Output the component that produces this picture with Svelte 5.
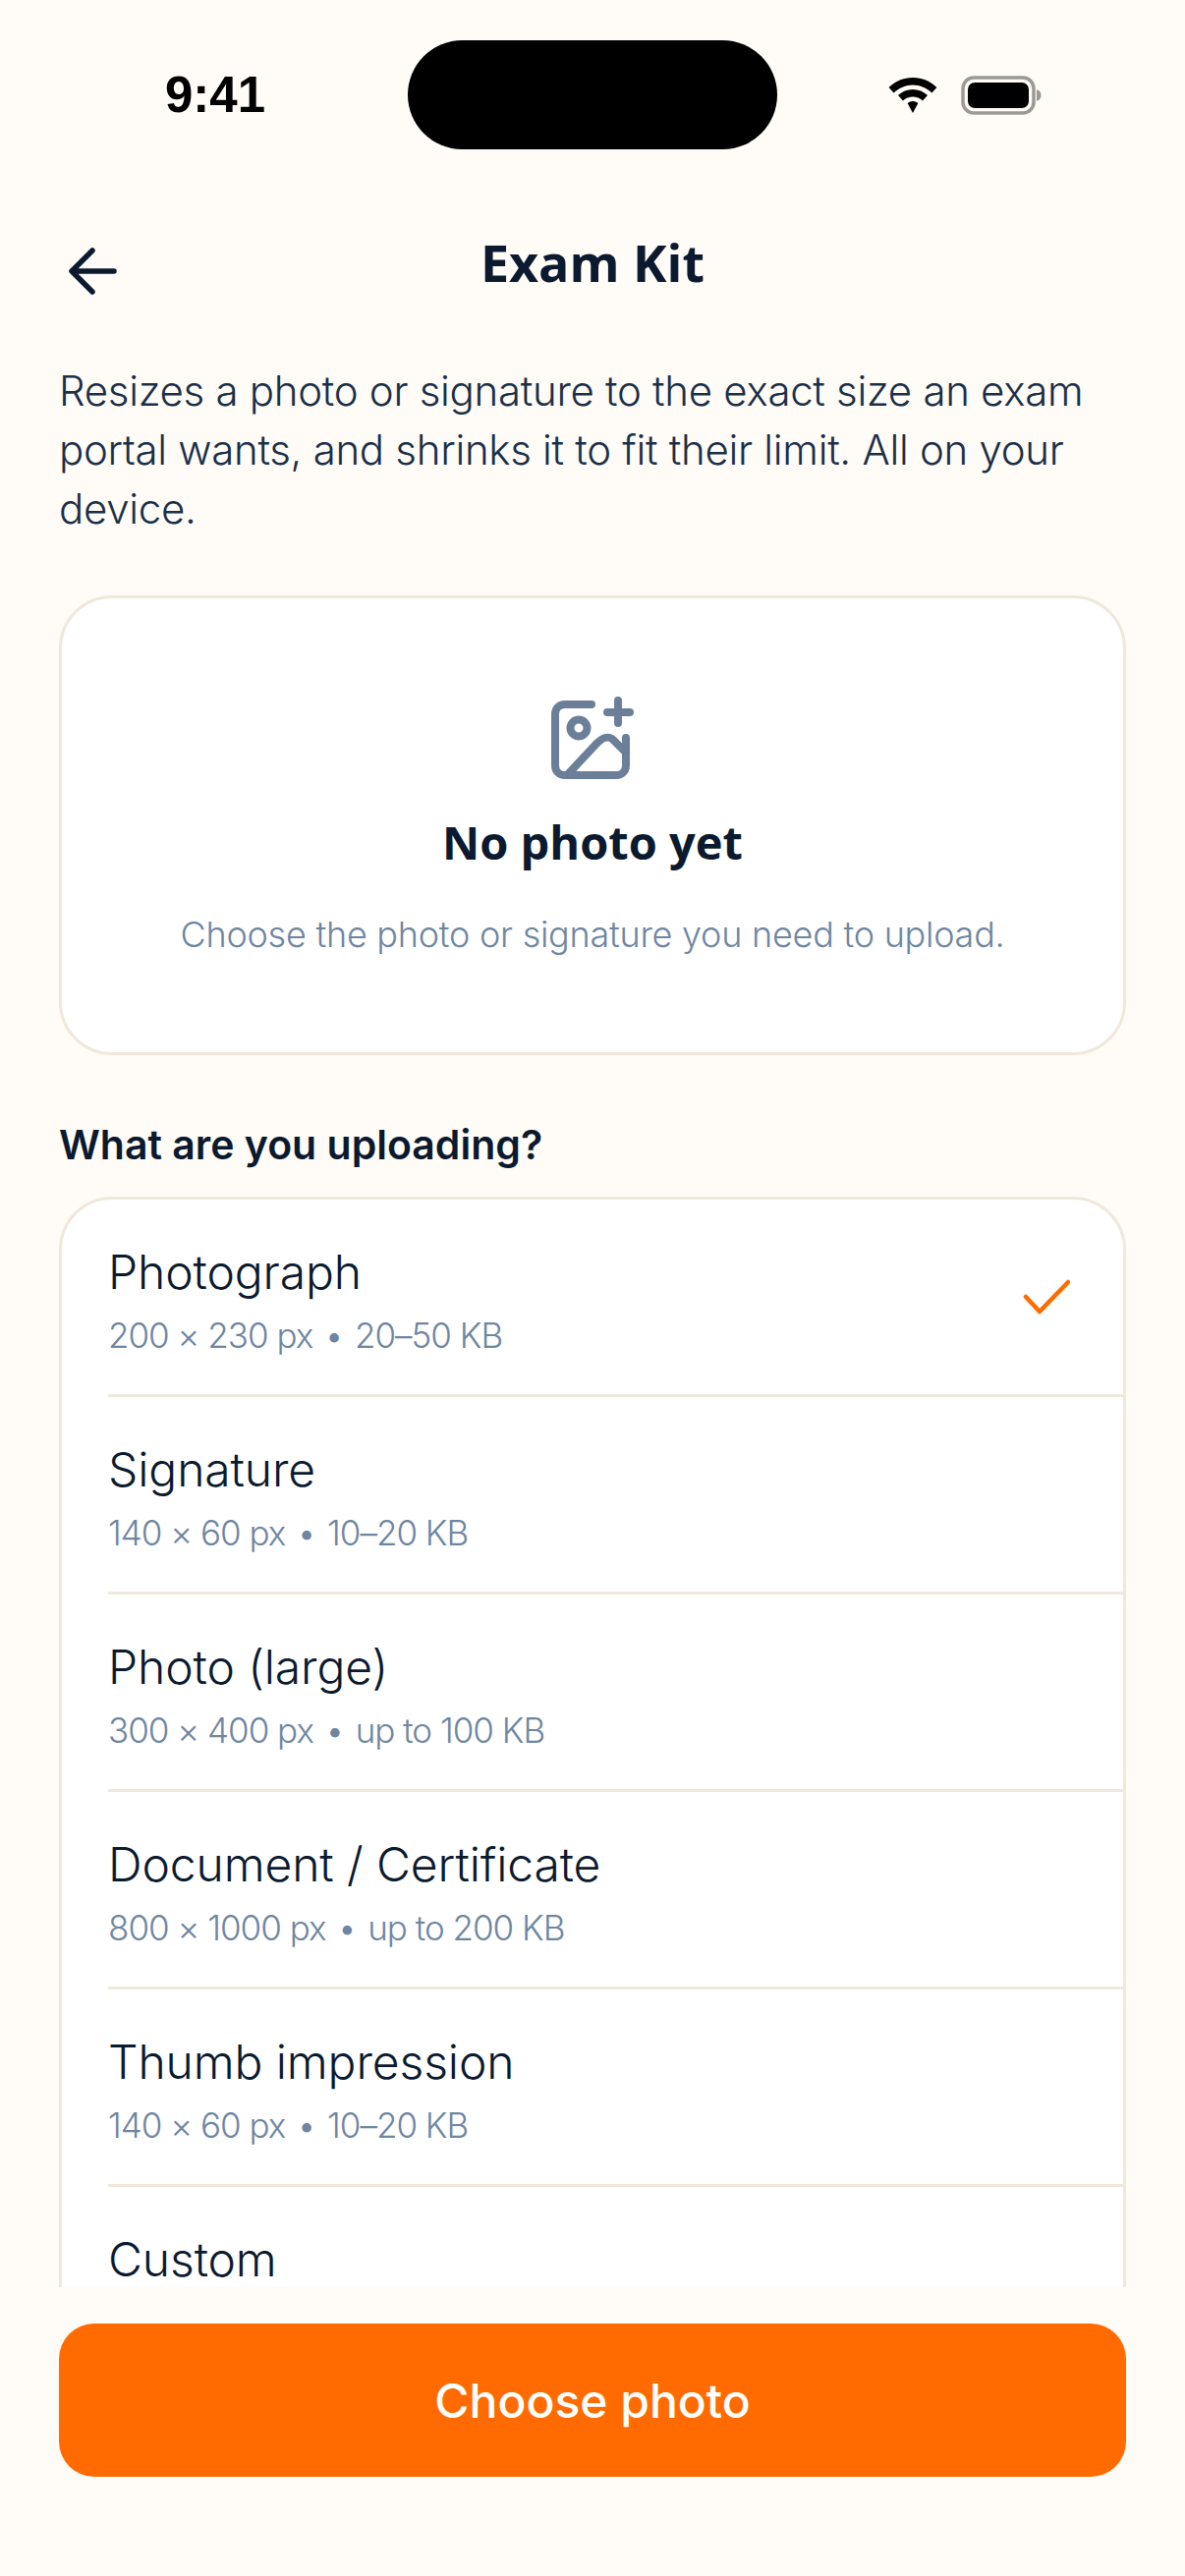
<script>
  const kinds = [
    { name: "Photograph", size: "200 × 230 px", limit: "20–50 KB", selected: true },
    { name: "Signature", size: "140 × 60 px", limit: "10–20 KB" },
    { name: "Photo (large)", size: "300 × 400 px", limit: "up to 100 KB" },
    { name: "Document / Certificate", size: "800 × 1000 px", limit: "up to 200 KB" },
    { name: "Thumb impression", size: "140 × 60 px", limit: "10–20 KB" },
    { name: "Custom" }
  ];
</script>

<div class="page">
  <div class="status">
    <span class="time">9:41</span>
    <div class="island"></div>
    <div class="status-icons">
      <svg width="50" height="36" viewBox="0 0 50 36">
        <path d="M25 0C15.5 0 7.2 3.6 0.6 10L5.6 15.6C10.8 10.6 17.6 7.6 25 7.6C32.4 7.6 39.2 10.6 44.4 15.6L49.4 10C42.8 3.6 34.5 0 25 0Z" fill="#000"/>
        <path d="M25 12C19.2 12 14.2 14.2 10 18L15 23.6C17.7 21.2 21.2 19.6 25 19.6C28.8 19.6 32.3 21.2 35 23.6L40 18C35.8 14.2 30.8 12 25 12Z" fill="#000"/>
        <path d="M25 24C23 24 21.2 24.7 19.6 26L25 36L30.4 26C28.8 24.7 27 24 25 24Z" fill="#000"/>
      </svg>
      <svg width="82" height="40" viewBox="0 0 82 40">
        <rect x="2" y="2" width="72" height="36" rx="11" fill="none" stroke="#9b9a97" stroke-width="3.5"/>
        <rect x="7" y="7" width="62" height="26" rx="7" fill="#000"/>
        <path d="M77 14C80 15 81.5 17 81.5 20C81.5 23 80 25 77 26Z" fill="#9b9a97"/>
      </svg>
    </div>
  </div>

  <header class="topbar">
    <button class="back" aria-label="Back">
      <svg width="54" height="54" viewBox="0 0 54 54" fill="none" stroke="#0b1a2e" stroke-width="5.5" stroke-linecap="round" stroke-linejoin="round">
        <path d="M49 27H7M27 6L6 27L27 48"/>
      </svg>
    </button>
    <h1>Exam Kit</h1>
  </header>

  <main class="content">
    <p class="intro">Resizes a photo or signature to the exact size an exam portal wants, and shrinks it to fit their limit. All on your device.</p>

    <section class="empty">
      <svg width="84" height="84" viewBox="0 0 84 84" fill="none" stroke="#6b7f99" stroke-width="8" stroke-linecap="round" stroke-linejoin="round">
        <path d="M41 8H14C8 8 4 12 4 18V70C4 76 8 80 14 80H66C72 80 76 76 76 70V42"/>
        <circle cx="28" cy="32" r="8.5"/>
        <path d="M17 79L47 47C51 43 58 39 63 44L76 57"/>
        <path d="M68 4V27M57 16H80"/>
      </svg>
      <h2>No photo yet</h2>
      <p>Choose the photo or signature you need to upload.</p>
    </section>

    <h3 class="label">What are you uploading?</h3>

    <ul class="list">
      {#each kinds as kind}
        <li class="row">
          <div class="row-text">
            <span class="name">{kind.name}</span>
            {#if kind.size}
              <span class="spec">{kind.size}<span class="dot">•</span>{kind.limit}</span>
            {/if}
          </div>
          {#if kind.selected}
            <svg class="check" width="48" height="36" viewBox="0 0 48 36" fill="none" stroke="#ff6b00" stroke-width="4.5" stroke-linecap="round" stroke-linejoin="round">
              <path d="M3 18L17 33L46 3"/>
            </svg>
          {/if}
        </li>
      {/each}
    </ul>
  </main>

  <footer class="footer">
    <button class="primary">Choose photo</button>
  </footer>
</div>

<style>
  :global(body) {
    margin: 0;
    background: #fffcf7;
  }
  .page {
    width: 1206px;
    height: 2622px;
    display: flex;
    flex-direction: column;
    overflow: hidden;
    background: #fffcf7;
    font-family: "Inter", "Liberation Sans", sans-serif;
    color: #0b1a2e;
  }
  .status {
    height: 111px;
    padding: 41px 146px 0 168px;
    display: flex;
    align-items: center;
    justify-content: space-between;
    flex-shrink: 0;
  }
  .time {
    font-family: "Liberation Sans", sans-serif;
    font-weight: 700;
    font-size: 51px;
    color: #000;
    width: 134px;
  }
  .island {
    width: 376px;
    height: 111px;
    border-radius: 56px;
    background: #000;
  }
  .status-icons {
    display: flex;
    align-items: center;
    gap: 24px;
  }
  .topbar {
    position: relative;
    height: 111px;
    margin-top: 59px;
    display: flex;
    align-items: center;
    justify-content: center;
    flex-shrink: 0;
  }
  .topbar h1 {
    margin: 0;
    font-family: "Open Sans", sans-serif;
    font-weight: 700;
    font-size: 52px;
  }
  .back {
    position: absolute;
    left: 67px;
    top: 38px;
    padding: 0;
    border: 0;
    background: none;
    display: flex;
  }
  .content {
    flex: 1;
    min-height: 0;
    overflow: hidden;
    padding: 0 60px;
    margin-top: 46px;
  }
  .intro {
    margin: 0;
    font-size: 42px;
    font-weight: 350;
    line-height: 60px;
    letter-spacing: -0.3px;
    color: #1b2f47;
  }
  .empty {
    margin-top: 58px;
    height: 468px;
    box-sizing: border-box;
    border: 3px solid #efe8dc;
    border-radius: 54px;
    background: #fff;
    display: flex;
    flex-direction: column;
    align-items: center;
    padding-top: 100px;
  }
  .empty h2 {
    margin: 34px 0 0;
    font-family: "Open Sans", sans-serif;
    font-weight: 700;
    font-size: 47px;
    line-height: 60px;
  }
  .empty p {
    margin: 37px 0 0;
    font-size: 36px;
    font-weight: 350;
    line-height: 54px;
    letter-spacing: -0.25px;
    color: #6f86a1;
  }
  .label {
    margin: 64px 0 0;
    font-size: 41px;
    line-height: 54px;
    font-weight: 600;
  }
  .list {
    list-style: none;
    margin: 26px 0 0;
    padding: 0;
    background: #fff;
    border: 3px solid #efe8dc;
    border-radius: 54px;
  }
  .row {
    height: 198px;
    margin-left: 47px;
    padding-right: 54px;
    display: flex;
    align-items: center;
    justify-content: space-between;
    border-bottom: 3px solid #efe8dc;
  }
  .row:last-child {
    border-bottom: 0;
  }
  .row-text {
    align-self: flex-start;
    padding-top: 41px;
    display: flex;
    flex-direction: column;
    gap: 7px;
  }
  .name {
    font-size: 48px;
    font-weight: 350;
    line-height: 66px;
    letter-spacing: -0.1px;
  }
  .spec {
    font-size: 35px;
    font-weight: 350;
    line-height: 48px;
    letter-spacing: -1px;
    color: #6f86a1;
  }
  .dot {
    margin: 0 12px;
  }
  .footer {
    height: 294px;
    flex-shrink: 0;
    box-sizing: border-box;
    padding: 37px 60px 0;
  }
  .primary {
    width: 100%;
    height: 156px;
    border: 0;
    border-radius: 36px;
    background: #ff6b00;
    color: #fff;
    font-family: "Inter", sans-serif;
    font-weight: 550;
    font-size: 48px;
  }
</style>
